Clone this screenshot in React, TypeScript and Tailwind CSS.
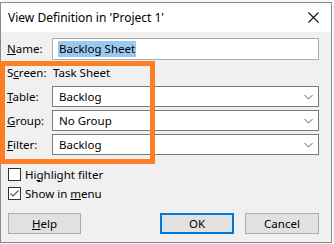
const FONT = { fontFamily: '"Noto Sans", "Liberation Sans", sans-serif' };

const rows = [
  { key: 'T', rest: 'able:', value: 'Backlog' },
  { key: 'G', rest: 'roup:', value: 'No Group' },
  { key: 'F', rest: 'ilter:', value: 'Backlog' },
];

const Select = ({ value }: { value: string }) => (
  <div className="flex h-[21px] flex-1 items-center justify-between border border-[#7a7a7a] bg-white pl-[6px] pr-[5px]">
    <span>{value}</span>
    <svg width="9" height="6" viewBox="0 0 9 6">
      <path d="M0.5 1 L4.5 5 L8.5 1" fill="none" stroke="#606060" strokeWidth="1" />
    </svg>
  </div>
);

const Checkbox = ({ checked, children }: { checked?: boolean; children: React.ReactNode }) => (
  <div className="flex h-[13px] items-center gap-[4px]">
    <div className="flex h-[13px] w-[13px] items-center justify-center border border-[#333] bg-white">
      {checked && (
        <svg width="11" height="11" viewBox="0 0 11 11">
          <path d="M1.5 5.5 L4 8 L9.5 2.5" fill="none" stroke="#555" strokeWidth="1.1" />
        </svg>
      )}
    </div>
    <span>{children}</span>
  </div>
);

export default function App() {
  return (
    <div className="h-[244px] w-[334px] overflow-hidden bg-[#f7f7f7] pt-[2px] text-[11.5px] leading-[16px] text-black" style={FONT}>
      <div className="relative h-[241px] w-[332px] border border-[#8a8a8a] bg-[#f0f0f0]">
        <div className="flex h-[29px] items-center justify-between bg-white pl-[7px] pr-[12px]">
          <span className="text-[12px]">View Definition in 'Project 1'</span>
          <svg width="11" height="11" viewBox="0 0 11 11">
            <path d="M0.5 0.5 L10.5 10.5 M10.5 0.5 L0.5 10.5" stroke="#111" strokeWidth="1.1" />
          </svg>
        </div>

        <div className="px-[6px] pt-[6px]">
          <div className="flex h-[22px] items-center">
            <span className="w-[45px]">
              <u>N</u>ame:
            </span>
            <div className="mr-[6px] flex h-[22px] flex-1 items-center border border-[#adadad] bg-white pl-[5px]">
              <span className="bg-[#99c9ef] px-[1px]">Backlog Sheet</span>
            </div>
          </div>

          <div className="mt-[3px] flex h-[20px] items-center">
            <span className="w-[46px]">
              S<u>c</u>reen:
            </span>
            <span>Task Sheet</span>
          </div>

          <div className="mt-[3px] flex flex-col gap-[3px] pr-[6px]">
            {rows.map((r) => (
              <div key={r.key} className="flex h-[21px] items-center">
                <span className="w-[45px]">
                  <u>{r.key}</u>
                  {r.rest}
                </span>
                <Select value={r.value} />
              </div>
            ))}
          </div>

          <div className="mt-[13px] flex flex-col gap-[6px] pl-[1px]">
            <Checkbox>
              Hi<u>g</u>hlight filter
            </Checkbox>
            <Checkbox checked>
              Show in <u>m</u>enu
            </Checkbox>
          </div>

          <div className="mt-[13px] flex h-[21px] items-center pl-[1px] pr-[6px]">
            <button className="h-[21px] w-[73px] border border-[#adadad] bg-[#e1e1e1]">
              <u>H</u>elp
            </button>
            <div className="flex-1" />
            <button className="h-[21px] w-[74px] border-2 border-[#0078d7] bg-[#e1e1e1]">OK</button>
            <button className="ml-[11px] h-[21px] w-[74px] border border-[#adadad] bg-[#e1e1e1]">Cancel</button>
          </div>
        </div>

        <div className="pointer-events-none absolute left-[-1px] top-[58px] h-[103px] w-[155px] border-[5px] border-[#fd7e23]" />
      </div>
    </div>
  );
}
